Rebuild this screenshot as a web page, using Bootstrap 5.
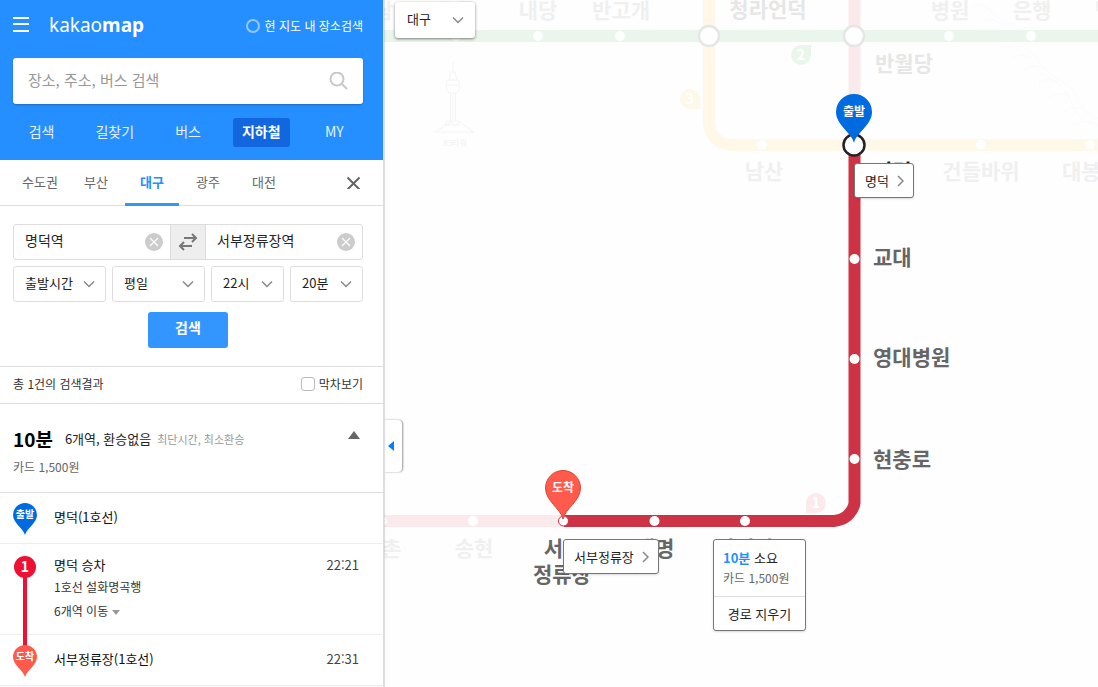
<!DOCTYPE html>
<html lang="ko">
<head>
<meta charset="utf-8">
<meta name="viewport" content="width=device-width, initial-scale=1">
<title>kakaomap</title>
<link href="https://cdn.jsdelivr.net/npm/bootstrap@5.3.0/dist/css/bootstrap.min.css" rel="stylesheet">
<style>
  body { font-family: "Noto Sans CJK KR", sans-serif; font-size: 13px; line-height: 20px; color: #222; background: #fefefe; }
  button, input, select { font-family: inherit; }
  .side-panel { flex: 0 0 384px; z-index: 3; border-right: 1px solid #ddd; box-shadow: 1px 0 1px rgba(0,0,0,.12); }
  .inset-x { padding-left: 13px; padding-right: 20px; }
  .line-b { border-bottom: 1px solid #ddd; }
  .gap-6 { gap: 6px; }

  .panel-head { background: #258fff; height: 160px; }
  .brand-row { height: 58px; padding-bottom: 6px; }
  .brand { font-family: "Noto Sans", sans-serif; font-size: 19px; line-height: 24px; padding-bottom: 2px; }
  .brand b { font-weight: 700; }
  .in-map { font-size: 12px; gap: 5px; }
  .in-map input { appearance: none; width: 14px; height: 14px; border: 2px solid #92c7ff; border-radius: 50%; }
  .search-box { height: 46px; border-radius: 3px; box-shadow: 0 1px 2px rgba(0,0,0,.25); padding: 0 15px; }
  .search-box input { font-size: 15px; padding: 0 0 2px; }
  .search-box input::placeholder { color: #999; opacity: 1; }
  .main-tabs { padding: 14px 12px 0 5px; }
  .main-tabs a { font-size: 14px; color: #e6f2ff; padding: 3px 9px 6px; border-radius: 3px; }
  .main-tabs a.active { background: #1266de; color: #fff; font-weight: 700; }

  .region-bar { height: 46px; padding-left: 13px; }
  .region-bar a { width: 54px; height: 46px; line-height: 44px; color: #666; border-bottom: 3px solid transparent; }
  .region-bar a.active { color: #258fff; font-weight: 700; border-bottom-color: #3396ff; }
  .region-list { gap: 2px; }
  .shut { padding: 0 23px 0 0; }

  .route-form { padding-top: 18px; padding-bottom: 18px; }
  .stations { height: 36px; border: 1px solid #ddd; border-radius: 3px; margin-bottom: 6px; }
  .stations input { font-size: 14px; padding: 0 0 3px 11px; }
  .clear { margin-right: 7px; }
  .swap { width: 36px; background: #eee; border: solid #ddd; border-width: 0 1px; }
  .pick { height: 36px; border: 1px solid #ddd; border-radius: 3px; font-size: 13px; color: #222; padding: 0 24px 3px 11px; background-position: right 10px center; background-size: 12px 12px;
    background-image: url("data:image/svg+xml,%3csvg xmlns='http://www.w3.org/2000/svg' viewBox='0 0 12 12'%3e%3cpath fill='none' stroke='%23888' stroke-width='1.5' d='M1 3.5l5 5 5-5'/%3e%3c/svg%3e"); }
  .w-long { flex: 93 1 93px; min-width: 0; } .w-short { flex: 73 1 73px; min-width: 0; }
  .go { width: 80px; height: 36px; background: #3396ff; border-radius: 3px; font-size: 14px; padding: 0 0 5px; margin-top: 10px; }

  .count-row { height: 37px; font-size: 12px; color: #333; padding-bottom: 2px; }
  .count-row .form-check-input { width: 14px; height: 14px; border-color: #bbb; border-radius: 3px; }
  .summary { height: 89px; padding-top: 21px; }
  .mins { font-size: 19px; line-height: 28px; font-weight: 700; color: #000; }
  .tags { font-size: 11px; color: #999; margin-left: 6px; }
  .fare { font-size: 12px; color: #666; }
  .toggle-up { margin-right: 3px; }
  .step { height: 51px; border-bottom: 1px solid #eee; padding-right: 24px; color: #111; }
  .step-ride { height: 91px; }
  .step-mark { width: 24px; margin-right: 17px; padding-top: 2px; }
  .step-text { padding-bottom: 2px; }
  .step-time { color: #444; }
  .ride-text { padding-top: 11px; }
  .ride-more { font-size: 12px; line-height: 24px; color: #333; }
  .ride-mark { position: absolute; left: 0; top: 12px; z-index: 1; }

  .map-area { min-width: 0; }
  .map-area text { font-weight: 700; font-size: 21px; fill: #666; }
  .map-area .pale text { fill: #f0f0f0; }
  .map-area .pale .transfer { fill: #e6e6e6; }
  .map-area .pale .line-no { font-size: 14px; fill: #fff; }
  .map-area .pale .sight { font-size: 8px; font-weight: 400; fill: #f0f0f0; }
  .map-area .pin-text { font-size: 12px; fill: #fff; }
  .small-pin text { font-weight: 700; font-size: 10px; fill: #fff; }
  .small-pin .line-no { font-size: 14px; }
  .floating { position: absolute; }
  .fold { left: 0; top: 420px; width: 18px; height: 52px; border-radius: 0 4px 4px 0; background: #fff; box-shadow: 1px 0 2px rgba(0,0,0,.4); }
  .city { left: 11px; top: 2px; width: 80px; box-shadow: 0 1px 3px rgba(0,0,0,.5); border-color: transparent; }
  .tip { border: 1px solid #777; border-radius: 3px; background: #fff; box-shadow: 0 1px 2px rgba(0,0,0,.15); color: #222; }
  .tip-name { height: 35px; padding: 0 9px 0 10px; font-size: 13px; }
  .tip-sum { width: 93px; }
  .tip-sum .line-b { padding: 8px 9px; }
  .tip-sum b { color: #258fff; }
  .erase { font-size: 13px; line-height: 33px; }
</style>
</head>
<body>
<div class="d-flex vh-100 overflow-hidden">
  <aside class="side-panel bg-white overflow-hidden d-flex flex-column">
    <header class="panel-head flex-shrink-0">
      <div class="brand-row inset-x d-flex align-items-center text-white">
        <button class="btn p-0 border-0 d-flex pb-1" type="button" aria-label="메뉴">
          <svg width="16" height="16" stroke="#fff" stroke-width="2"><path d="M0 2h16M0 8h16M0 15h16"/></svg>
        </button>
        <a class="brand ms-3 ps-1 text-white text-decoration-none" href="#">kakao<b>map</b></a>
        <label class="in-map ms-auto d-flex align-items-center"><input type="checkbox">현 지도 내 장소검색</label>
      </div>
      <div class="inset-x">
        <div class="search-box bg-white d-flex align-items-center">
          <input class="form-control border-0 shadow-none bg-transparent" type="text" placeholder="장소, 주소, 버스 검색" aria-label="장소, 주소, 버스 검색">
          <button class="btn p-0 border-0 d-flex" type="button" aria-label="검색">
            <svg width="19" height="19" fill="none" stroke="#c8c8c8" stroke-width="2"><circle cx="8" cy="7" r="6.5"/><path d="M12.5 11.5l5.5 5.5"/></svg>
          </button>
        </div>
      </div>
      <nav class="main-tabs d-flex">
        <div class="w-100 text-center"><a class="d-inline-block text-decoration-none" href="#">검색</a></div>
        <div class="w-100 text-center"><a class="d-inline-block text-decoration-none" href="#">길찾기</a></div>
        <div class="w-100 text-center"><a class="d-inline-block text-decoration-none" href="#">버스</a></div>
        <div class="w-100 text-center"><a class="d-inline-block text-decoration-none active" href="#">지하철</a></div>
        <div class="w-100 text-center"><a class="d-inline-block text-decoration-none" href="#">MY</a></div>
      </nav>
    </header>

    <nav class="region-bar line-b d-flex flex-shrink-0 text-center">
      <div class="region-list d-flex">
        <a class="text-decoration-none" href="#">수도권</a>
        <a class="text-decoration-none" href="#">부산</a>
        <a class="text-decoration-none active" href="#">대구</a>
        <a class="text-decoration-none" href="#">광주</a>
        <a class="text-decoration-none" href="#">대전</a>
      </div>
      <button class="btn border-0 ms-auto shut d-flex align-items-center" type="button" aria-label="닫기">
        <svg width="13" height="13" stroke="#666" stroke-width="2"><path d="M.5 1.500l12 12M12.500 1.500l-12 12"/></svg>
      </button>
    </nav>

    <form class="route-form inset-x line-b flex-shrink-0">
      <div class="stations d-flex">
        <div class="d-flex w-50 align-items-center">
          <input class="form-control border-0 shadow-none bg-transparent" type="text" value="명덕역" aria-label="출발역">
          <button class="btn p-0 border-0 d-flex clear" type="button" aria-label="출발역 지우기"><svg width="18" height="18"><circle cx="9" cy="9" r="9" fill="#ccc"/><path d="M5 5l8 8M13 5l-8 8" stroke="#fff" stroke-width="1.2"/></svg></button>
        </div>
        <button class="btn swap rounded-0 p-0 flex-shrink-0 d-flex align-items-center justify-content-center" type="button" aria-label="출발역 도착역 바꾸기">
          <svg width="20" height="18" fill="none" stroke="#777" stroke-width="2"><path d="M6 5h12M14 1l4 4-4 4M14 13H2M6 9l-4 4 4 4"/></svg>
        </button>
        <div class="d-flex w-50 align-items-center">
          <input class="form-control border-0 shadow-none bg-transparent" type="text" value="서부정류장역" aria-label="도착역">
          <button class="btn p-0 border-0 d-flex clear" type="button" aria-label="도착역 지우기"><svg width="18" height="18"><circle cx="9" cy="9" r="9" fill="#ccc"/><path d="M5 5l8 8M13 5l-8 8" stroke="#fff" stroke-width="1.2"/></svg></button>
        </div>
      </div>
      <div class="d-flex gap-6">
        <select class="form-select pick w-long" aria-label="시간 기준"><option>출발시간</option></select>
        <select class="form-select pick w-long" aria-label="요일"><option>평일</option></select>
        <select class="form-select pick w-short" aria-label="시"><option>22시</option></select>
        <select class="form-select pick w-short" aria-label="분"><option>20분</option></select>
      </div>
      <button class="btn go border-0 text-white fw-bold d-block mx-auto" type="button">검색</button>
    </form>

    <div class="count-row inset-x line-b d-flex flex-shrink-0 align-items-center justify-content-between">
      <span>총 1건의 검색결과</span>
      <label class="d-flex align-items-center gap-1"><input class="form-check-input m-0" type="checkbox">막차보기</label>
    </div>

    <section class="summary inset-x line-b flex-shrink-0">
      <div class="d-flex align-items-center">
        <span class="mins">10분</span>
        <span class="ms-2 ps-1">6개역, 환승없음</span>
        <span class="tags">최단시간, 최소환승</span>
        <svg class="ms-auto toggle-up mb-2" width="12" height="8"><path d="M0 8L6 0l6 8z" fill="#666"/></svg>
      </div>
      <div class="fare pt-1">카드 1,500원</div>
    </section>

    <ol class="list-unstyled m-0 flex-shrink-0">
      <li class="step inset-x d-flex align-items-center">
        <span class="step-mark d-flex">
          <svg class="small-pin" width="24" height="32"><path d="M12 32C10 25 0 20 0 12a12 12 0 0 1 24 0C24 20 14 25 12 32z" fill="#006be0"/><text x="12" y="15" text-anchor="middle">출발</text></svg>
        </span>
        <span class="step-text">명덕(1호선)</span>
      </li>
      <li class="step step-ride inset-x d-flex">
        <div class="step-mark position-relative">
          <svg class="ride-mark small-pin" width="24" height="92"><path d="M12 10v82" stroke="#ee1133" stroke-width="4"/><circle cx="12" cy="11" r="11" fill="#ee1133"/><text class="line-no" x="12" y="16" text-anchor="middle">1</text></svg>
        </div>
        <div class="flex-grow-1 ride-text">
          <div class="d-flex justify-content-between"><span>명덕 승차</span><span class="step-time">22:21</span></div>
          <div class="ride-more">1호선 설화명곡행</div>
          <div class="ride-more">6개역 이동 <svg width="8" height="5"><path d="M0 0h8L4 5z" fill="#999"/></svg></div>
        </div>
      </li>
      <li class="step inset-x d-flex align-items-center">
        <span class="step-mark d-flex position-relative z-2">
          <svg class="small-pin" width="24" height="32"><path d="M12 32C10 25 0 20 0 12a12 12 0 0 1 24 0C24 20 14 25 12 32z" fill="#ff5a4c"/><text x="12" y="15" text-anchor="middle">도착</text></svg>
        </span>
        <span class="step-text">서부정류장(1호선)</span>
        <span class="step-text step-time ms-auto">22:31</span>
      </li>
    </ol>
    <div class="flex-grow-1 bg-light"></div>
  </aside>

  <main class="map-area flex-grow-1 position-relative overflow-hidden">
    <svg class="d-block" width="100%" height="100%" role="img" aria-label="대구 지하철 노선도">
      <g class="pale">
        <!-- river -->
        <g fill="none" stroke="#f9fcfe" stroke-width="1">
          <path d="M588 6q12-4 20 6t22 12M598 22q8-6 16 0t18 2"/>
          <path d="M620 46q14 0 22 12t24 20 22 26 27 22M634 46q12 2 20 14t22 20 20 22 19 16"/>
          <path d="M628 58q10-6 20 0M640 70q12-8 22 0M652 84q10-8 22-2M664 98q12-8 22-2M678 112q12-8 24-2M690 126q12-8 24-2"/>
        </g>
        <!-- tower -->
        <path d="M69 62v10M67 72h4l2 8h-8zM63 80h12l1 8-3 5h-8l-3-5zM63 85h12M66.500 93v28M69 93v28M71.500 93v28M63 121h12v4H61zM51 132l16-10 4 4 5-4 14 10z" fill="none" stroke="#f4f4f4"/>
        <text x="71" y="146" text-anchor="middle" class="sight">83타워</text>
        <g fill="none" stroke-width="12">
          <path d="M325 0V119Q325 145 351 145H3000" stroke="#fff8e8"/>
          <path d="M0 36H3000" stroke="#eaf6ec"/>
          <path d="M470.500 0V145M0 521H180" stroke="#faeaec"/>
        </g>
        <g fill="#fefefe">
          <circle cx="72" cy="36" r="5"/><circle cx="154" cy="36" r="5"/><circle cx="236" cy="36" r="5"/><circle cx="565" cy="36" r="5"/><circle cx="647" cy="36" r="5"/>
          <circle cx="378" cy="145" r="5"/><circle cx="597" cy="145" r="5"/><circle cx="706" cy="145" r="5"/>
          <circle cx="-2" cy="521" r="5"/><circle cx="89" cy="521" r="5"/>
          <circle cx="325" cy="36" r="10" stroke="#e6e6e6" stroke-width="2.5"/><circle cx="470" cy="36" r="10" stroke="#e6e6e6" stroke-width="2.5"/>
        </g>
        <path d="M417 45h10v10a10 10 0 1 1-10-10z" fill="#eaf6ec"/>
        <path d="M316 109h-10a10 10 0 1 1 10-10z" fill="#fff8e8"/>
        <path d="M422 513v-10a10 10 0 1 1 10 10z" fill="#faeaec"/>
        <g text-anchor="middle">
          <text x="417" y="60" class="line-no">2</text>
          <text x="306" y="104" class="line-no">3</text>
          <text x="432" y="508" class="line-no">1</text>
          <text x="-10" y="18">감삼</text><text x="72" y="18">두류</text><text x="154" y="18">내당</text><text x="237" y="18">반고개</text>
          <text x="384" y="17" class="transfer">청라언덕</text>
          <text x="566" y="18">병원</text><text x="648" y="18">은행</text><text x="730" y="18">범어</text>
          <text x="520" y="71" class="transfer">반월당</text>
          <text x="380" y="179">남산</text><text x="597" y="179">건들바위</text><text x="707" y="179">대봉교</text>
          <text x="-2" y="556">월촌</text><text x="90" y="556">송현</text>
        </g>
      </g>
      <path d="M470.500 145V503Q470 508 465 514T450 521H180" fill="none" stroke="#ce3245" stroke-width="12"/>
      <g fill="#fff">
        <circle cx="470.500" cy="259" r="5"/><circle cx="470.500" cy="359" r="5"/><circle cx="470.500" cy="459" r="5"/>
        <circle cx="361" cy="521" r="5"/><circle cx="270.500" cy="521" r="5"/>
        <circle cx="179.500" cy="521" r="5" stroke="#ce3245"/>
        <circle cx="470" cy="145" r="10.500" stroke="#222" stroke-width="2.5"/>
      </g>
      <text x="489" y="179" style="fill:#222">명덕</text>
      <text x="489" y="265">교대</text><text x="489" y="365">영대병원</text><text x="489" y="467">현충로</text>
      <g text-anchor="middle">
        <text x="179" y="556">서부</text><text x="178" y="582">정류장</text><text x="271" y="556">대명</text><text x="361" y="556">안지랑</text>
        <path d="M470 143C468 133 452 125 452 112a18 18 0 0 1 36 0C488 125 472 133 470 143z" fill="#006be0"/>
        <text class="pin-text" x="470" y="116">출발</text>
        <path d="M179 519C177 509 161.500 501 161.500 488a17.500 17.500 0 0 1 35 0C196.500 501 181 509 179 519z" fill="#ff5a4c" stroke="#d8493d"/>
        <text class="pin-text" x="179" y="492">도착</text>
      </g>
    </svg>

    <select class="form-select pick floating city" aria-label="도시"><option>대구</option></select>
    <button class="btn border-0 floating fold d-flex align-items-center p-0 ps-1" type="button" aria-label="패널 접기">
      <svg width="6" height="10"><path d="M6 0v10L0 5z" fill="#007fff"/></svg>
    </button>
    <button class="btn floating tip tip-name d-flex align-items-center gap-2" type="button" style="left:470px;top:163px">명덕 <svg width="7" height="12" fill="none" stroke="#888" stroke-width="1.5"><path d="M1 1l5 5-5 5"/></svg></button>
    <button class="btn floating tip tip-name d-flex align-items-center gap-2" type="button" style="left:179px;top:539px">서부정류장 <svg width="7" height="12" fill="none" stroke="#888" stroke-width="1.5"><path d="M1 1l5 5-5 5"/></svg></button>
    <div class="floating tip tip-sum" style="left:329px;top:539px">
      <div class="line-b">
        <div><b>10분</b> 소요</div>
        <div class="fare">카드 1,500원</div>
      </div>
      <button class="btn border-0 w-100 p-0 erase" type="button">경로 지우기</button>
    </div>
  </main>
</div>
<script src="https://cdn.jsdelivr.net/npm/bootstrap@5.3.0/dist/js/bootstrap.bundle.min.js"></script>
</body>
</html>
